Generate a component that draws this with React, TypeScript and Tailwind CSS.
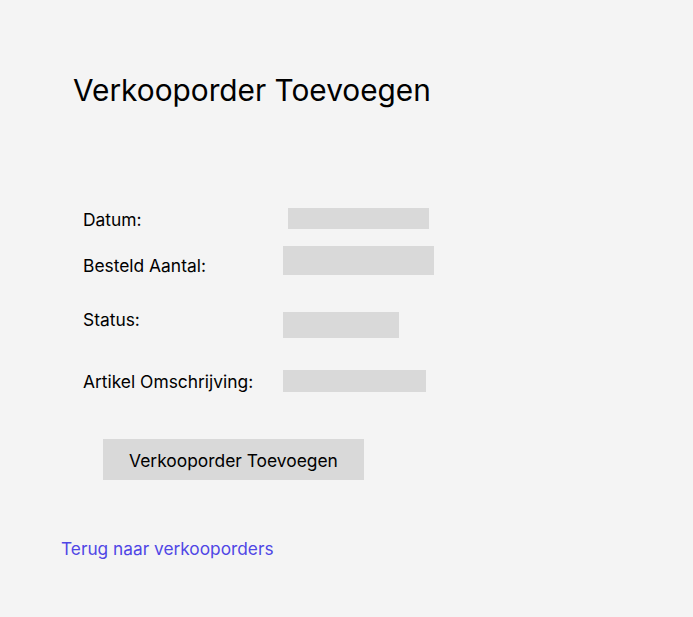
export default function App() {
  return (
    <div className="min-h-[617px] w-full bg-[#f4f4f4] text-black" style={{ fontFamily: 'Inter, "Noto Sans", sans-serif' }}>
      <div className="pt-[70px] pl-[73px]">
        <h1 className="text-[29.8px] leading-[40px] font-normal">Verkooporder Toevoegen</h1>
      </div>
      <div className="mt-[98px] pl-[83px] flex flex-col text-[17.4px] leading-[24px]">
        <div className="flex items-start">
          <div className="w-[200px]">Datum:</div>
          <div className="ml-[5px] w-[141px] h-[21px] bg-[#d9d9d9]" />
        </div>
        <div className="flex items-start mt-[14px]">
          <div className="w-[200px] mt-[8px]">Besteld Aantal:</div>
          <div className="w-[151px] h-[29px] bg-[#d9d9d9]" />
        </div>
        <div className="flex items-start mt-[30px]">
          <div className="w-[200px]">Status:</div>
          <div className="mt-[4px] w-[116px] h-[26px] bg-[#d9d9d9]" />
        </div>
        <div className="flex items-start mt-[32px]">
          <div className="w-[200px]">Artikel Omschrijving:</div>
          <div className="w-[143px] h-[22px] bg-[#d9d9d9]" />
        </div>
      </div>
      <div className="mt-[45px] pl-[103px]">
        <button className="w-[261px] h-[41px] bg-[#d9d9d9] text-[17.4px] pt-[3px] flex items-center justify-center">Verkooporder Toevoegen</button>
      </div>
      <div className="mt-[57px] pl-[61px]">
        <a className="text-[17.3px] leading-[24px] text-[#4f46e5]">Terug naar verkooporders</a>
      </div>
    </div>
  );
}
